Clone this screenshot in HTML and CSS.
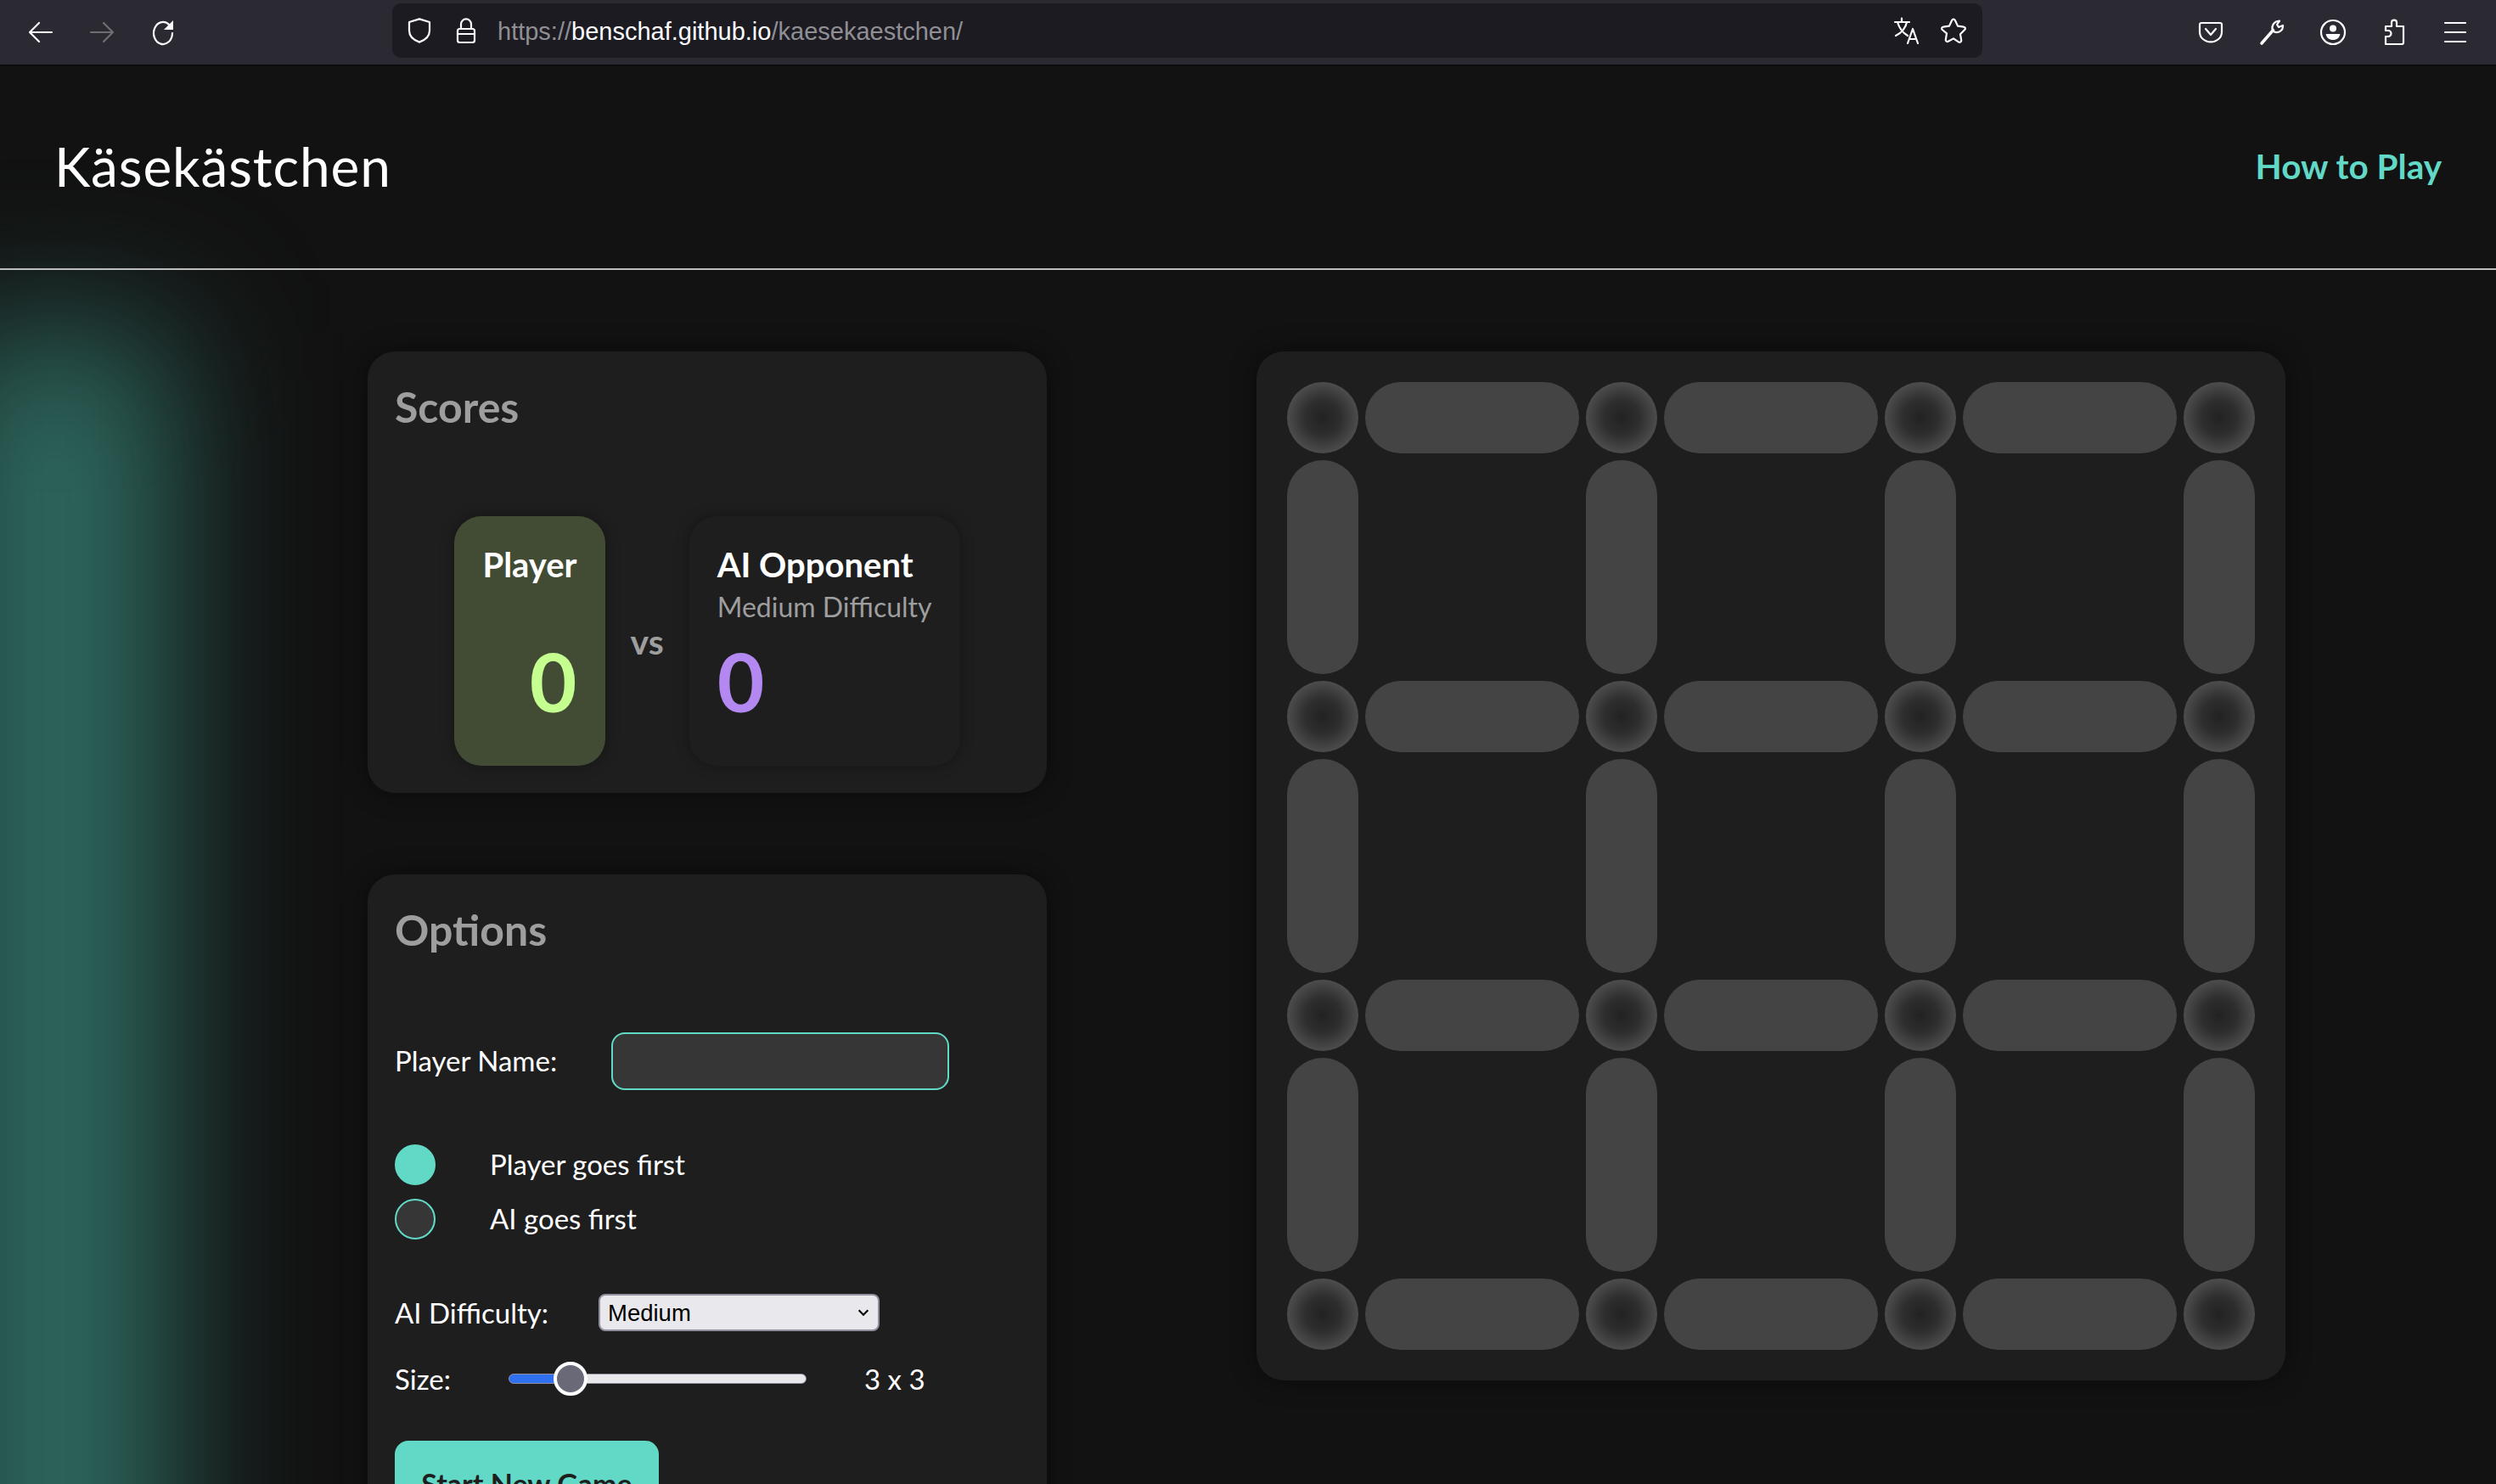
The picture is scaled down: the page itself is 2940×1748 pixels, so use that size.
FILE: index.html
```html
<!DOCTYPE html>
<html lang="de">
<head>
    <meta charset="UTF-8">
    <meta name="viewport" content="width=device-width, initial-scale=1.0">
    <title>Käsekästchen</title>
    <link rel="stylesheet" href="styles.css">
</head>
<body>
    <div class="toolbar">
        <div class="nav-icons">
            <svg class="icon" viewBox="0 0 16 16"><path d="M14.5 8H1.5M7 2.5 1.5 8 7 13.5"/></svg>
            <svg class="icon dim" viewBox="0 0 16 16"><path d="M1.5 8h13M9 2.5 14.5 8 9 13.5"/></svg>
            <svg class="icon" viewBox="0 0 16 16"><path d="M13.5 8.5a5.5 6.5 0 1 1-1.7-4.7L13.5 5.5"/><path class="solid" d="M14 1v5.5H8.5z"/></svg>
        </div>
        <div class="urlbar">
            <svg class="icon" viewBox="0 0 16 16"><path d="M8 1.2 14 3v5c0 3.2-2.6 5.6-6 6.8C4.6 13.6 2 11.200 2 8V3z"/></svg>
            <svg class="icon" viewBox="0 0 16 16"><rect x="3" y="7" width="10" height="8" rx="1.200"/><path d="M5 7V4.200a3 3 0 0 1 6 0V7M3 10h10"/></svg>
            <div class="url"><span>https://</span><b>benschaf.github.io</b><span>/kaesekaestchen/</span></div>
            <svg class="icon" viewBox="0 0 16 16"><path d="M1 3h8.500M5 .8V3M2.500 3c1 3.500 3.500 6.500 6 8M8 3c-.5 3-3 6.500-6.500 8M8.500 15.500 11.500 7l3 8.500M9.500 13h4"/></svg>
            <svg class="icon" viewBox="0 0 16 16"><path d="M8 1.300c.4 0 .7.200.9.600l1.600 3.400 3.500.5c.9.100 1.200 1.100.6 1.700l-2.600 2.600.6 3.600c.1.900-.8 1.500-1.500 1.100L8 12.700l-3.100 1.700c-.7.400-1.600-.2-1.500-1.100l.6-3.600L1.400 7.500c-.6-.6-.3-1.600.6-1.700l3.500-.5 1.600-3.400c.2-.4.500-.6.900-.6z"/></svg>
        </div>
        <div class="tool-icons">
            <svg class="icon" viewBox="0 0 16 16"><path d="M2.500 2.500h11a1 1 0 0 1 1 1v4.200c0 3.500-2.900 6-6.500 6s-6.500-2.500-6.500-6V3.500a1 1 0 0 1 1-1z"/><path d="M5 6l3 3.500L11 6"/></svg>
            <svg class="icon" viewBox="0 0 16 16"><path class="thick" d="M2 14.500 8.700 6.800"/><path d="M8.500 7c-1-2.500.5-5.500 4-5.700L11 3.500l1 1.500 2.500-1c.2 3-2.800 5-5.500 3.500z"/></svg>
            <svg class="icon" viewBox="0 0 16 16"><circle cx="8" cy="8" r="7"/><circle class="solid" cx="8" cy="5.800" r="2"/><path class="solid" d="M3.800 9h8.400c-.3 2.200-2 3.500-4.200 3.500S4.100 11.200 3.800 9z"/></svg>
            <svg class="icon" viewBox="0 0 16 16"><path d="M3 15V10.500h1.500a1.500 1.500 0 0 0 0-3.500H3V4.500h3.500V2.300a1.500 1.500 0 0 1 3 0v2.200H13.500V14a1 1 0 0 1-1 1z"/></svg>
            <svg class="icon" viewBox="0 0 16 16"><path d="M2 2.500h12M2 8h12M2 13.500h12"/></svg>
        </div>
    </div>

    <div class="glow"></div>

    <header class="site-header">
        <h1>Käsekästchen</h1>
        <a class="help-link" href="#">How to Play</a>
    </header>

    <main class="page">
        <div class="left-col">
            <section class="card">
                <h2>Scores</h2>
                <div class="score-row">
                    <div class="score-card active">
                        <div class="score-name">Player</div>
                        <div class="score-sub"></div>
                        <div class="score-value player">0</div>
                    </div>
                    <div class="versus">vs</div>
                    <div class="score-card">
                        <div class="score-name">AI Opponent</div>
                        <div class="score-sub">Medium Difficulty</div>
                        <div class="score-value ai">0</div>
                    </div>
                </div>
            </section>

            <section class="card">
                <h2>Options</h2>
                <form class="options">
                    <div class="name-row">
                        <label class="name-label" for="player-name">Player Name:</label>
                        <input class="name-input" type="text" id="player-name">
                    </div>
                    <div class="radio-group">
                        <label class="radio-row"><input type="radio" name="first" checked><span>Player goes first</span></label>
                        <label class="radio-row"><input type="radio" name="first"><span>AI goes first</span></label>
                    </div>
                    <div class="difficulty-row">
                        <label class="difficulty-label" for="difficulty">AI Difficulty:</label>
                        <div class="select-wrap">
                            <select id="difficulty">
                                <option>Easy</option>
                                <option selected>Medium</option>
                                <option>Hard</option>
                            </select>
                            <svg class="chevron" viewBox="0 0 12 12"><path d="M2 4l4 4 4-4"/></svg>
                        </div>
                    </div>
                    <div class="size-row">
                        <label class="size-label" for="size">Size:</label>
                        <input class="size-slider" type="range" id="size" min="2" max="8" value="3">
                        <span class="size-value">3 x 3</span>
                    </div>
                    <button class="start-btn" type="button">Start New Game</button>
                </form>
            </section>
        </div>

        <section class="board">
            <div class="dot"></div><div class="hbar"></div><div class="dot"></div><div class="hbar"></div><div class="dot"></div><div class="hbar"></div><div class="dot"></div>
            <div class="vbar"></div><div></div><div class="vbar"></div><div></div><div class="vbar"></div><div></div><div class="vbar"></div>
            <div class="dot"></div><div class="hbar"></div><div class="dot"></div><div class="hbar"></div><div class="dot"></div><div class="hbar"></div><div class="dot"></div>
            <div class="vbar"></div><div></div><div class="vbar"></div><div></div><div class="vbar"></div><div></div><div class="vbar"></div>
            <div class="dot"></div><div class="hbar"></div><div class="dot"></div><div class="hbar"></div><div class="dot"></div><div class="hbar"></div><div class="dot"></div>
            <div class="vbar"></div><div></div><div class="vbar"></div><div></div><div class="vbar"></div><div></div><div class="vbar"></div>
            <div class="dot"></div><div class="hbar"></div><div class="dot"></div><div class="hbar"></div><div class="dot"></div><div class="hbar"></div><div class="dot"></div>
        </section>
    </main>
</body>
</html>
```

FILE: styles.css
```css
html, body {
    height: 1748px;
    overflow: hidden;
}
body {
    margin: 0;
    position: relative;
    background-color: #121212;
    color: #fff;
    font-family: Lato, "Noto Sans", sans-serif;
    font-size: 33px;
}

/* browser chrome */
.toolbar {
    position: relative;
    z-index: 1;
    display: flex;
    align-items: center;
    height: 76px;
    padding: 0 32px;
    box-sizing: border-box;
    background-color: #2b2a33;
    box-shadow: 0 2px 0 #0c0c0d;
}
.icon {
    flex: none;
    width: 32px;
    height: 32px;
    fill: none;
    stroke: #fbfbfe;
    stroke-width: 1.1;
    stroke-linecap: round;
    stroke-linejoin: round;
}
.icon.dim {
    stroke: #6f6e75;
}
.icon .solid {
    fill: #fbfbfe;
    stroke: none;
}
.icon .thick {
    stroke-width: 1.800;
}
.nav-icons, .tool-icons {
    display: flex;
    gap: 40px;
}
.urlbar {
    display: flex;
    align-items: center;
    width: 1873px;
    height: 64px;
    margin: -4px 253px 0 254px;
    padding: 0 18px 0 16px;
    box-sizing: border-box;
    background-color: #1c1b22;
    border-radius: 10px;
    gap: 23px;
}
.url {
    flex: 1;
    margin-left: -2px;
    padding-top: 2px;
    font-family: "Liberation Sans", sans-serif;
    font-size: 29px;
    color: #8f8f94;
    white-space: nowrap;
}
.url b {
    font-weight: normal;
    color: #fbfbfe;
}

/* blurred teal light on the left side */
.glow {
    position: absolute;
    left: -70px;
    top: 390px;
    width: 270px;
    height: 1700px;
    background-color: #2e6a60;
    filter: blur(85px);
}

.site-header {
    position: relative;
    display: flex;
    justify-content: space-between;
    align-items: center;
    height: 240px;
    padding: 0 64px;
    border-bottom: 2px solid #bdbdbd;
}
.site-header h1 {
    margin: 0;
    font-size: 64px;
    font-weight: 400;
    line-height: 80px;
    letter-spacing: 0.9px;
}
.help-link {
    padding-bottom: 2px;
    font-size: 40.500px;
    font-weight: 700;
    color: #62d9c6;
    text-decoration: none;
}

.page {
    position: relative;
    display: flex;
    align-items: flex-start;
    gap: 247px;
    padding: 96px 0 0 433px;
}
.left-col {
    display: flex;
    flex-direction: column;
    gap: 96px;
    width: 800px;
}
.card, .board {
    background-color: #1e1e1e;
    border-radius: 32px;
    box-shadow: 0 0 30px rgba(0, 0, 0, 0.45);
}
.card {
    padding: 32px;
}
.card h2 {
    margin: 0;
    font-size: 50px;
    font-weight: 700;
    line-height: 66px;
    color: #9e9e9e;
}

/* scores */
.score-row {
    display: flex;
    justify-content: center;
    align-items: center;
    gap: 30px;
    margin-top: 96px;
}
.score-card {
    align-self: stretch;
    padding: 32px 33px;
    height: 230px;
    border-radius: 32px;
    background-color: #1e1e1e;
    box-shadow: 0 0 16px rgba(0, 0, 0, 0.35);
}
.score-card.active {
    background-color: #424c35;
}
.score-name {
    font-size: 40px;
    font-weight: 700;
    line-height: 50px;
}
.score-sub {
    height: 48px;
    padding-top: 1px;
    box-sizing: border-box;
    font-size: 32px;
    line-height: 48px;
    color: #9e9e9e;
}
.score-value {
    font-size: 96px;
    font-weight: 700;
    line-height: 128px;
}
.score-value.player {
    color: #c5ff8f;
    text-align: right;
}
.score-value.ai {
    color: #b388f0;
}
.versus {
    font-size: 41px;
    font-weight: 700;
    color: #9e9e9e;
}

/* options */
.options {
    margin-top: 88px;
}
.name-row, .difficulty-row, .size-row {
    display: flex;
    align-items: center;
}
.name-label {
    width: 255px;
    padding-bottom: 2px;
}
.name-input {
    width: 398px;
    height: 68px;
    box-sizing: border-box;
    background-color: #363636;
    border: 2px solid #62d9c6;
    border-radius: 16px;
}
.radio-group {
    display: flex;
    flex-direction: column;
    gap: 16px;
    margin-top: 64px;
}
.radio-row {
    display: flex;
    align-items: center;
    gap: 64px;
}
.radio-row span {
    padding-bottom: 2px;
}
.radio-row input {
    appearance: none;
    flex: none;
    width: 48px;
    height: 48px;
    margin: 0;
    box-sizing: border-box;
    background-color: #363636;
    border: 2px solid #62d9c6;
    border-radius: 50%;
}
.radio-row input:checked {
    background-color: #62d9c6;
}
.difficulty-row {
    margin-top: 64px;
}
.difficulty-label {
    width: 240px;
}
.select-wrap {
    position: relative;
    width: 331px;
    height: 44px;
}
.select-wrap select {
    appearance: none;
    display: block;
    width: 100%;
    height: 100%;
    padding: 0 0 0 9px;
    background-color: #e9e9ed;
    border: 2px solid #8f8f9d;
    border-radius: 8px;
    color: #000;
    font-family: "Liberation Sans", sans-serif;
    font-size: 27.500px;
}
.chevron {
    position: absolute;
    right: 11px;
    top: 14px;
    width: 16px;
    height: 16px;
    fill: none;
    stroke: #000;
    stroke-width: 1.600;
}
.size-row {
    margin-top: 36px;
}
.size-label {
    width: 134px;
}
.size-slider {
    appearance: none;
    width: 351px;
    height: 40px;
    margin: 0;
    background: none;
}
.size-slider::-webkit-slider-runnable-track {
    height: 12px;
    box-sizing: border-box;
    border: 1px solid #8f8f9d;
    border-radius: 6px;
    background: linear-gradient(to right, #3071f2 71px, #e9e9ed 71px);
}
.size-slider::-webkit-slider-thumb {
    appearance: none;
    width: 40px;
    height: 40px;
    margin-top: -15px;
    box-sizing: border-box;
    background-color: #696977;
    border: 4px solid #fff;
    border-radius: 50%;
}
.size-value {
    margin-left: 68px;
}
.start-btn {
    display: block;
    width: 311px;
    height: 100px;
    margin-top: 53px;
    padding: 0;
    background-color: #62d9c6;
    border: none;
    border-radius: 16px;
    color: #1e1e1e;
    font-family: inherit;
    font-size: 34px;
    font-weight: 700;
}

/* game board */
.board {
    display: grid;
    grid-template-columns: 84px 252px 84px 252px 84px 252px 84px;
    grid-template-rows: 84px 252px 84px 252px 84px 252px 84px;
    gap: 8px;
    padding: 36px;
}
.dot {
    border-radius: 50%;
    background: radial-gradient(circle, #222 0%, #2e2e2e 35%, #666 100%);
}
.hbar, .vbar {
    border-radius: 42px;
    background-color: #444;
}
```
